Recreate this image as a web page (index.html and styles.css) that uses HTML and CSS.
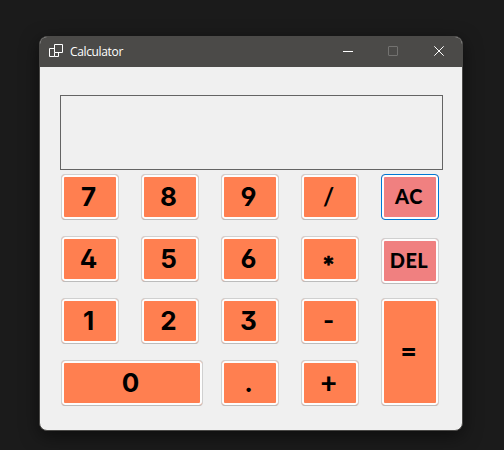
FILE: index.html
```html
<!DOCTYPE html>
<html lang="en">
<head>
<meta charset="utf-8">
<title>Calculator</title>
<link rel="stylesheet" href="styles.css">
</head>
<body>
<main class="window">
  <header class="titlebar">
    <svg class="app-icon" width="14" height="14" viewBox="0 0 14 14"><path d="M5.5 .5h8v8h-8zM5.5 4.5h-5v8h5v-4M5.5 12.5h4v-4" /></svg>
    <span class="title">Calculator</span>
    <div class="controls">
      <svg class="minimize" width="10" height="10" viewBox="0 0 10 10"><path d="M0 5.5h10"/></svg>
      <svg class="disabled" width="10" height="10" viewBox="0 0 10 10"><rect x=".5" y=".5" width="9" height="9" rx=".5"/></svg>
      <svg class="close" width="10" height="10" viewBox="0 0 10 10"><path d="M.3.3l9.4 9.4M9.7.3L.3 9.7"/></svg>
    </div>
  </header>
  <div class="display"></div>
  <div class="keys">
    <div class="pad">
      <button><span>7</span></button><button><span>8</span></button><button><span>9</span></button><button><span class="slash">/</span></button>
      <button><span>4</span></button><button><span>5</span></button><button><span>6</span></button><button><span class="star">*</span></button>
      <button><span>1</span></button><button><span>2</span></button><button><span>3</span></button><button><span class="minus">-</span></button>
      <button class="zero"><span>0</span></button><button><span>.</span></button><button><span class="plus">+</span></button>
    </div>
    <div class="side">
      <button class="clear focused"><span>AC</span></button>
      <button class="clear delete"><span>DEL</span></button>
      <button class="equals"><span class="equal-sign">=</span></button>
    </div>
  </div>
</main>
</body>
</html>
```
FILE: styles.css
```css
* { box-sizing: border-box; }
body {
  margin: 0;
  height: 450px;
  padding: 36px 41px 19px 39px;
  background: #1b1b1b;
  overflow: hidden;
}
.window {
  width: 424px;
  height: 395px;
  border: 1px solid #4b4a48;
  border-radius: 8px;
  background: #f0f0f0;
  box-shadow: 0 5px 18px rgba(0, 0, 0, .5);
  overflow: hidden;
}
.titlebar {
  display: flex;
  align-items: center;
  height: 30px;
  padding: 0 18px 0 9px;
  background: #4b4a48;
  color: #fff;
}
svg { fill: none; stroke: #fff; stroke-width: 1; display: block; }
.app-icon { margin-right: 7px; margin-top: -2px; }
.title { font: 12px/16px "Open Sans", "Noto Sans", sans-serif; letter-spacing: -.35px; }
.controls { display: flex; margin-left: auto; margin-top: -2px; }
.controls .minimize { margin-right: 35px; }
.controls .disabled { stroke: #737270; margin-right: 36px; }
.display {
  width: 383px;
  height: 75px;
  margin: 28px 0 4px 20px;
  border: 1px solid #646464;
}
.keys { display: flex; gap: 22px; padding-left: 21px; }
.pad {
  display: grid;
  grid-template-columns: repeat(4, 58px);
  grid-auto-rows: 46px;
  gap: 16px 22px;
}
.side { display: flex; flex-direction: column; width: 58px; }
button {
  display: flex;
  align-items: center;
  justify-content: center;
  min-width: 0;
  height: 46px;
  padding: 0 3px 0 0;
  border: 1px solid #d0d0d0;
  border-bottom-color: #bcbcbc;
  border-radius: 4px;
  background: #ff7f50;
  box-shadow: inset 0 0 0 2px #fdfdfd;
  color: #000;
  font: 700 26px/30px Inter, sans-serif;
  font-feature-settings: "ss01", "cv03", "cv04", "cv09";
}
.zero { grid-column: span 2; width: 142px; }
.clear { padding: 0 2px 2px 0; background: #f08080; font: 900 20px/24px Lato, sans-serif; letter-spacing: .5px; }
.focused { border-color: #0078d4; }
.delete { margin: 18px 0 14px; }
.equals { height: 108px; }
.slash { font: 700 24px/30px Lato, sans-serif; }
.star { font: 900 27px/30px Lato, sans-serif; padding-top: 13px; -webkit-text-stroke: .7px #000; }
.minus { font: 700 24px/30px Inter, sans-serif; }
.plus { font: 900 28px/30px Lato, sans-serif; padding-bottom: 2px; }
.equal-sign { font: 900 28px/30px Lato, sans-serif; padding-bottom: 3px; }
```
